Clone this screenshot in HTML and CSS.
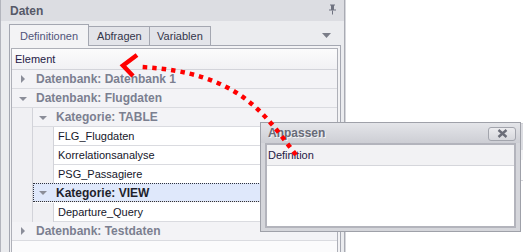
FILE: index.html
```html
<!DOCTYPE html>
<html>
<head>
<meta charset="utf-8">
<link rel="stylesheet" href="styles.css">
</head>
<body>
<div class="panel">
  <div class="titlebar">
    <span class="title">Daten</span>
    <svg class="pin" width="9" height="11" viewBox="0 0 9 11"><path d="M2 0.5h5v1h-1v4h2v1h-7v-1h2v-4h-1z" fill="#6f7280"/><rect x="4" y="6.5" width="1" height="4" fill="#6f7280"/></svg>
  </div>
  <div class="tabs">
    <div class="tab active">Definitionen</div>
    <div class="tab">Abfragen</div>
    <div class="tab">Variablen</div>
    <svg class="tabmenu" width="9" height="5" viewBox="0 0 9 5"><path d="M0 0h9l-4.5 5z" fill="#7a7d88"/></svg>
  </div>
  <div class="page">
    <div class="grid">
      <div class="hdr">Element</div>
      <div class="row"><div class="cell grp"><span class="exp closed"></span>Datenbank: Datenbank 1</div></div>
      <div class="row"><div class="cell grp"><span class="exp open"></span>Datenbank: Flugdaten</div></div>
      <div class="row"><div class="ind"></div><div class="cell grp"><span class="exp open"></span>Kategorie: TABLE</div></div>
      <div class="row"><div class="ind"></div><div class="ind"></div><div class="cell leaf">FLG_Flugdaten</div></div>
      <div class="row"><div class="ind"></div><div class="ind"></div><div class="cell leaf">Korrelationsanalyse</div></div>
      <div class="row"><div class="ind"></div><div class="ind"></div><div class="cell leaf">PSG_Passagiere</div></div>
      <div class="row"><div class="ind"></div><div class="cell grp sel"><span class="exp open"></span>Kategorie: VIEW</div></div>
      <div class="row"><div class="ind"></div><div class="ind"></div><div class="cell leaf">Departure_Query</div></div>
      <div class="row"><div class="cell grp"><span class="exp closed"></span>Datenbank: Testdaten</div></div>
    </div>
  </div>
</div>

<div class="behind"></div>

<div class="dialog">
  <div class="dlg-title">
    <span class="dlg-name">Anpassen</span>
    <div class="close"><svg width="11" height="9" viewBox="0 0 11 9"><path d="M1.5 1l8 7M9.5 1l-8 7" stroke="#6b6d78" stroke-width="2.4"/></svg></div>
  </div>
  <div class="dlg-body">
    <div class="dlg-hdr">Definition</div>
  </div>
</div>

<svg class="arrow" width="523" height="252" viewBox="0 0 523 252">
  <path d="M296 155 C265 115 240 72 141 67" fill="none" stroke="#ff0000" stroke-width="4.5" stroke-dasharray="4.5 5"/>
  <path d="M137 55 L123 65.5 L133 76" fill="none" stroke="#ff0000" stroke-width="4.5"/>
</svg>
</body>
</html>
```

FILE: styles.css
```css
html, body {
  margin: 0;
  padding: 0;
}
body {
  width: 523px;
  height: 252px;
  overflow: hidden;
  background: #ffffff;
  position: relative;
  font-family: "Liberation Sans", Arial, sans-serif;
  font-size: 11px;
}
.panel {
  width: 345px;
  height: 252px;
  background: #ebecef;
  border-left: 1px solid #b3b5bd;
  border-right: 1px solid #a9abb3;
  box-sizing: border-box;
  box-shadow: 1px 0 0 #d6d7dc;
  display: flex;
  flex-direction: column;
}
.titlebar {
  height: 21px;
  flex: none;
  background: #dcdde2;
  display: flex;
  align-items: center;
  justify-content: space-between;
  padding: 0 7px 0 9px;
}
.title {
  font-weight: bold;
  font-size: 12px;
  color: #565968;
}
.pin { margin-top: -2px; }
.tabs {
  height: 24px;
  flex: none;
  display: flex;
  align-items: flex-end;
  padding-left: 8px;
  position: relative;
}
.tab {
  height: 19px;
  box-sizing: border-box;
  border: 1px solid #a4a7b1;
  border-bottom: none;
  background: #e3e4e9;
  color: #33354a;
  padding: 0 8px;
  display: flex;
  align-items: center;
  margin-left: -1px;
}
.tab.active {
  height: 22px;
  margin-left: 0;
  background: #f3f3f5;
  color: #51557a;
  padding: 0 10px;
  margin-bottom: -1px;
  position: relative;
  z-index: 1;
}
.tab:nth-child(2) { width: 62px; padding-left: 8px; }
.tab:nth-child(3) { width: 62px; padding-left: 7px; }
.tabmenu {
  position: absolute;
  right: 13px;
  top: 12px;
}
.page {
  flex: 1;
  margin: 0 3px 0 8px;
  border: 1px solid #a4a7b1;
  border-bottom: none;
  background: #f3f3f5;
  padding: 2px 2px 0 1px;
}
.grid {
  height: 100%;
  border: 1px solid #aeb0b8;
  border-bottom: none;
  background: #fbfbfc;
  box-sizing: border-box;
}
.hdr {
  height: 20px;
  border-bottom: 1px solid #d3d4da;
  background: linear-gradient(#fbfbfc, #f1f1f4);
  color: #1f2046;
  display: flex;
  align-items: center;
  padding-left: 3px;
}
.row {
  height: 19px;
  display: flex;
}
.ind {
  width: 20px;
  flex: none;
  background: #f0f0f3;
  border-right: 1px solid #d2d3d9;
}
.cell {
  flex: 1;
  height: 18px;
  border-bottom: 1px solid #dadbe0;
  display: flex;
  align-items: center;
}
.grp {
  background: #f3f3f6;
  color: #7b7f90;
  font-weight: bold;
  font-size: 12px;
}
.grp.sel {
  background: #dfe8fb;
  color: #1e1f2c;
  outline: 1px dotted #30323c;
  outline-offset: -1px;
  height: 17px;
  border-top: 1px solid transparent;
  margin-top: -1px;
  border-bottom: 1px solid #dadbe0;
}
.leaf {
  background: #ffffff;
  color: #15162a;
  padding-left: 4px;
}
.exp {
  width: 24px;
  flex: none;
  display: flex;
  justify-content: center;
  padding-right: 3px;
  box-sizing: border-box;
}
.row .ind + .grp .exp { width: 23px; padding-right: 4px; }
.exp::before {
  content: "";
  display: block;
  width: 0;
  height: 0;
}
.exp.closed::before {
  border-left: 4px solid #8b8e99;
  border-top: 4px solid transparent;
  border-bottom: 4px solid transparent;
}
.exp.open::before {
  border-top: 4px solid #8b8e99;
  border-left: 4px solid transparent;
  border-right: 4px solid transparent;
  margin-top: 1px;
}
.behind {
  position: absolute;
  left: 518px;
  top: 123px;
  width: 10px;
  height: 57px;
  background: linear-gradient(#dcdde2 0, #dcdde2 27px, #f3f3f5 27px, #f3f3f5 37px, #ffffff 37px);
  border-bottom: 1px solid #d6d7dc;
  box-shadow: inset 0 37px 0 -36px #d0d1d6;
}
.dialog {
  position: absolute;
  left: 260px;
  top: 122px;
  width: 261px;
  height: 110px;
  box-sizing: border-box;
  border: 1px solid #9fa1a9;
  background: #d5d6db;
  display: flex;
  flex-direction: column;
  padding: 0 4px 3px 4px;
}
.dlg-title {
  height: 20px;
  flex: none;
  margin: 0 -4px;
  padding: 0 4px 0 7px;
  background: linear-gradient(#e4e5e9, #cdced4);
  display: flex;
  align-items: center;
  justify-content: space-between;
}
.dlg-name {
  font-weight: bold;
  font-size: 12px;
  color: #686b78;
  text-shadow: 1px 1px 0 #f4f4f6;
}
.close {
  width: 28px;
  height: 14px;
  box-sizing: border-box;
  border: 1px solid #a3a5ad;
  border-radius: 3px;
  background: linear-gradient(#ececef, #d6d7dc);
  display: flex;
  align-items: center;
  justify-content: center;
  margin-top: 1px;
}
.dlg-body {
  flex: 1;
  border: 2px solid #b3b4bc;
  background: #ffffff;
}
.dlg-hdr {
  height: 20px;
  background: #f2f2f4;
  border-bottom: 1px solid #d5d6db;
  color: #1f2046;
  display: flex;
  align-items: center;
  padding-left: 1px;
}
.arrow {
  position: absolute;
  left: 0;
  top: 0;
  pointer-events: none;
}
```
